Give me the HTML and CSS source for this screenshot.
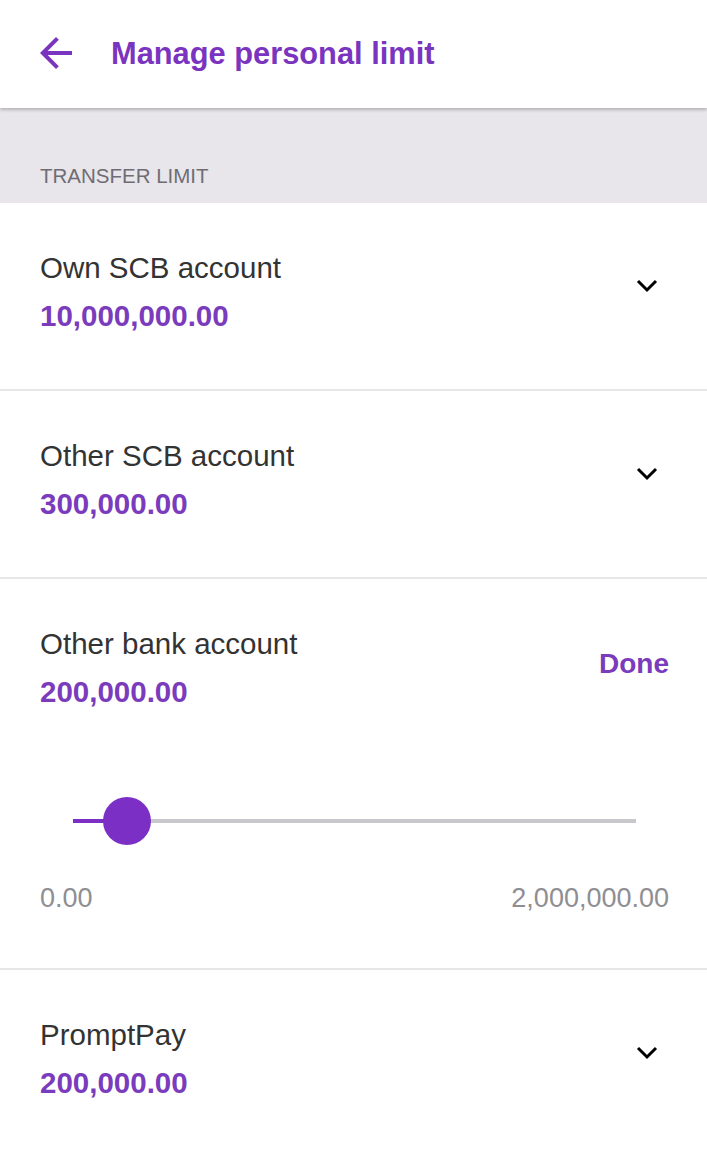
FILE: index.html
```html
<!DOCTYPE html>
<html lang="en">
<head>
    <meta charset="UTF-8">
    <meta name="viewport" content="width=device-width, initial-scale=1.0">
    <title>Manage personal limit</title>
    <link rel="stylesheet" href="styles.css">
</head>
<body>
    <!-- Верхняя панель -->
    <header class="topbar">
        <svg class="back-icon" viewBox="0 0 24 24" width="48" height="48">
            <path d="M20 11H7.83l5.59-5.59L12 4l-8 8 8 8 1.41-1.41L7.83 13H20v-2z" fill="#7a34c0"/>
        </svg>
        <h1 class="title">Manage personal limit</h1>
    </header>

    <div class="section-title">TRANSFER LIMIT</div>

    <div class="limit-row">
        <div class="limit-info">
            <div class="limit-name">Own SCB account</div>
            <div class="limit-amount">10,000,000.00</div>
        </div>
        <svg class="chevron" viewBox="0 0 22 14" width="22" height="14">
            <path d="M2 2 L11 11 L20 2" fill="none" stroke="#000" stroke-width="3"/>
        </svg>
    </div>

    <div class="limit-row">
        <div class="limit-info">
            <div class="limit-name">Other SCB account</div>
            <div class="limit-amount">300,000.00</div>
        </div>
        <svg class="chevron" viewBox="0 0 22 14" width="22" height="14">
            <path d="M2 2 L11 11 L20 2" fill="none" stroke="#000" stroke-width="3"/>
        </svg>
    </div>

    <!-- Раскрытая строка со слайдером -->
    <div class="limit-row expanded">
        <div class="row-head">
            <div class="limit-info">
                <div class="limit-name">Other bank account</div>
                <div class="limit-amount">200,000.00</div>
            </div>
            <a href="#" class="done">Done</a>
        </div>
        <div class="slider">
            <div class="track">
                <div class="track-fill"></div>
            </div>
            <div class="thumb"></div>
        </div>
        <div class="range-labels">
            <span>0.00</span>
            <span>2,000,000.00</span>
        </div>
    </div>

    <div class="limit-row">
        <div class="limit-info">
            <div class="limit-name">PromptPay</div>
            <div class="limit-amount">200,000.00</div>
        </div>
        <svg class="chevron" viewBox="0 0 22 14" width="22" height="14">
            <path d="M2 2 L11 11 L20 2" fill="none" stroke="#000" stroke-width="3"/>
        </svg>
    </div>
</body>
</html>
```

FILE: styles.css
```css
body {
    margin: 0;
    font-family: 'Liberation Sans', Arial, sans-serif;
    color: #333;
    background: #fff;
}

.topbar {
    height: 108px;
    display: flex;
    align-items: center;
    padding: 0 32px;
    background: #fff;
    box-shadow: 0 2px 3px rgba(0, 0, 0, 0.22);
    position: relative;
    z-index: 2;
}

.back-icon {
    display: block;
    margin-top: -2px;
}

.title {
    margin: 0 0 0 31px;
    font-size: 30.8px;
    font-weight: 700;
    color: #7a34c0;
    line-height: 36px;
}

.section-title {
    height: 95px;
    box-sizing: border-box;
    background: #e8e6eb;
    padding: 0 40px 15px;
    display: flex;
    align-items: flex-end;
    font-size: 20.5px;
    line-height: 24px;
    color: #6f6d73;
}

.limit-row {
    display: flex;
    justify-content: space-between;
    align-items: center;
    padding: 48px 38px 56px 40px;
    border-bottom: 2px solid #e6e6e6;
}

.limit-name {
    font-size: 29.5px;
    line-height: 34px;
    color: #333;
}

.limit-amount {
    margin-top: 14px;
    font-size: 29.5px;
    line-height: 34px;
    font-weight: 700;
    color: #7a3bbd;
}

.chevron {
    display: block;
    margin-right: 11px;
    margin-top: -12px;
}

.limit-row.expanded {
    display: block;
    padding-bottom: 54px;
}

.row-head {
    display: flex;
    justify-content: space-between;
    align-items: center;
}

.done {
    font-size: 28px;
    font-weight: 700;
    color: #7a3bbd;
    text-decoration: none;
    margin-top: -8px;
}

.slider {
    position: relative;
    height: 48px;
    margin: 88px 33px 0 33px;
    display: flex;
    align-items: center;
}

.track {
    width: 100%;
    height: 4px;
    background: #c8c7cc;
}

.track-fill {
    width: 32px;
    height: 100%;
    background: #7b2fc4;
}

.thumb {
    position: absolute;
    left: 30px;
    top: 0;
    width: 48px;
    height: 48px;
    border-radius: 50%;
    background: #7b2fc4;
}

.range-labels {
    display: flex;
    justify-content: space-between;
    margin-top: 37px;
    font-size: 27px;
    line-height: 32px;
    color: #8e8e93;
}
```
